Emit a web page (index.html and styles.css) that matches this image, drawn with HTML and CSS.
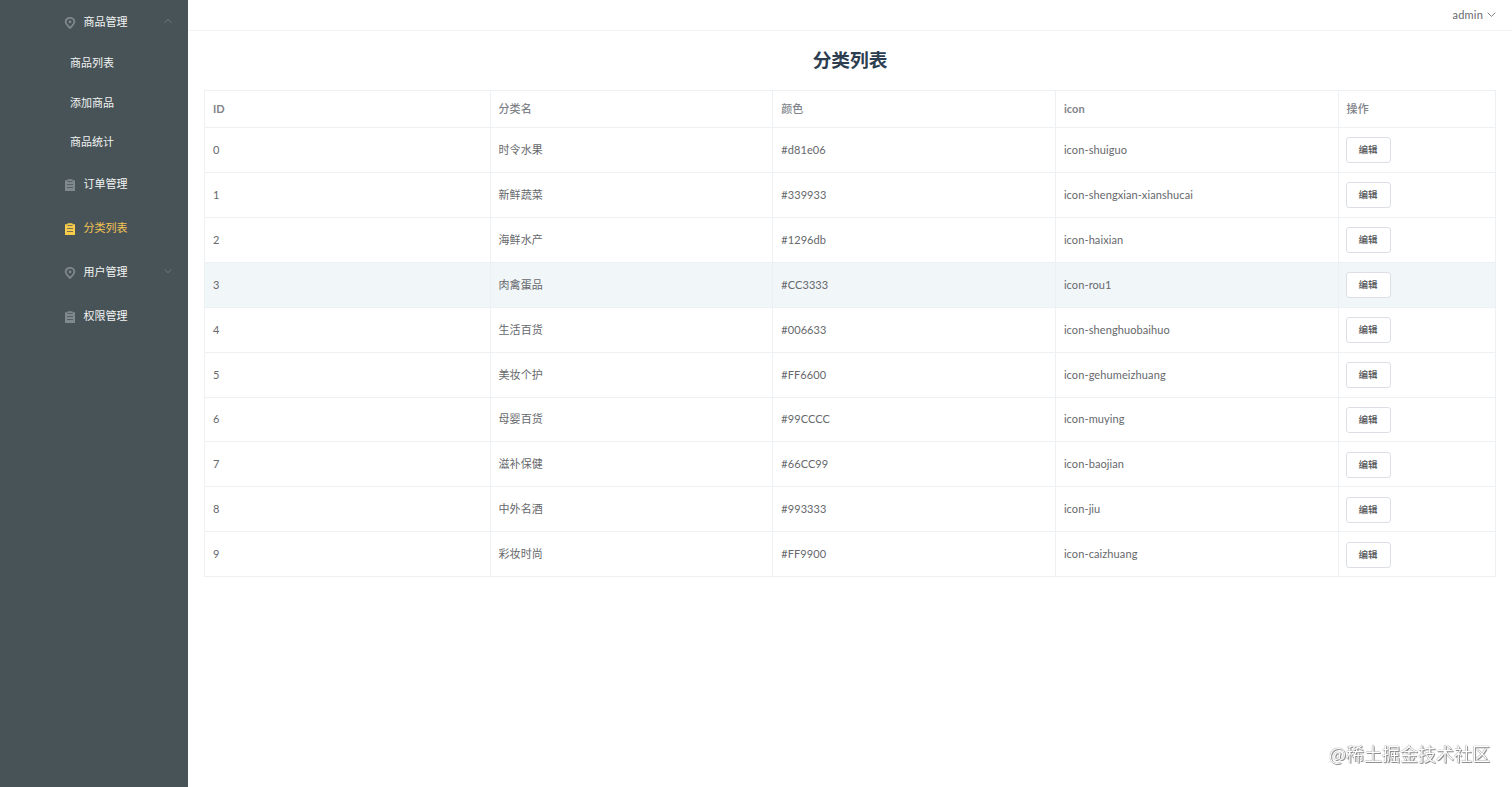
FILE: index.html
```html
<!DOCTYPE html>
<html lang="zh-CN">
<head>
    <meta charset="UTF-8">
    <meta name="viewport" content="width=device-width, initial-scale=1.0">
    <title>分类列表</title>
    <link rel="stylesheet" href="styles.css">
</head>
<body>

<!-- menu icons -->
<svg class="symbols">
    <symbol id="icon-location" viewBox="0 0 12 12">
        <path fill="none" stroke="currentColor" stroke-width="1.8" d="M6 11C4.2 8.9 1.6 7.3 1.6 4.9a4.4 4.1 0 0 1 8.8 0C10.4 7.3 7.8 8.9 6 11z"/>
        <circle fill="currentColor" cx="6" cy="4.9" r="1.4"/>
    </symbol>
    <symbol id="icon-order" viewBox="0 0 12 12">
        <path fill="currentColor" fill-rule="evenodd" d="M1 1.2h2.5V.3h5v.9H11V12H1zM3.5 2v.8h5V2zM3 4.9v.9h6v-.9zM3 8.2v.9h6v-.9z"/>
    </symbol>
    <symbol id="icon-down" viewBox="0 0 8 8">
        <path fill="none" stroke="currentColor" stroke-width=".75" d="M.6 2.4 4 5.7l3.4-3.3"/>
    </symbol>
</svg>

<div class="layout">
    <aside class="sidebar">
        <ul class="menu">
            <li>
                <div class="menu-item first">
                    <svg class="menu-icon"><use href="#icon-location"/></svg>
                    <span>商品管理</span>
                    <svg class="arrow up"><use href="#icon-down"/></svg>
                </div>
                <ul class="submenu">
                    <li>商品列表</li>
                    <li>添加商品</li>
                    <li>商品统计</li>
                </ul>
            </li>
            <li class="menu-item">
                <svg class="menu-icon"><use href="#icon-order"/></svg>
                <span>订单管理</span>
            </li>
            <li class="menu-item active">
                <svg class="menu-icon"><use href="#icon-order"/></svg>
                <span>分类列表</span>
            </li>
            <li class="menu-item">
                <svg class="menu-icon"><use href="#icon-location"/></svg>
                <span>用户管理</span>
                <svg class="arrow"><use href="#icon-down"/></svg>
            </li>
            <li class="menu-item">
                <svg class="menu-icon"><use href="#icon-order"/></svg>
                <span>权限管理</span>
            </li>
        </ul>
    </aside>

    <div class="main">
        <header class="header">
            <span>admin</span>
            <svg class="user-arrow"><use href="#icon-down"/></svg>
        </header>

        <h2 class="title">分类列表</h2>

        <table class="table">
            <colgroup>
                <col class="col-id">
                <col class="col-name">
                <col class="col-color">
                <col class="col-icon">
                <col>
            </colgroup>
            <thead>
                <tr><th class="en">ID</th><th>分类名</th><th>颜色</th><th class="en">icon</th><th>操作</th></tr>
            </thead>
            <tbody>
                <tr><td>0</td><td>时令水果</td><td>#d81e06</td><td>icon-shuiguo</td><td><button class="btn">编辑</button></td></tr>
                <tr><td>1</td><td>新鲜蔬菜</td><td>#339933</td><td>icon-shengxian-xianshucai</td><td><button class="btn">编辑</button></td></tr>
                <tr><td>2</td><td>海鲜水产</td><td>#1296db</td><td>icon-haixian</td><td><button class="btn">编辑</button></td></tr>
                <tr class="hover"><td>3</td><td>肉禽蛋品</td><td>#CC3333</td><td>icon-rou1</td><td><button class="btn">编辑</button></td></tr>
                <tr><td>4</td><td>生活百货</td><td>#006633</td><td>icon-shenghuobaihuo</td><td><button class="btn">编辑</button></td></tr>
                <tr><td>5</td><td>美妆个护</td><td>#FF6600</td><td>icon-gehumeizhuang</td><td><button class="btn">编辑</button></td></tr>
                <tr><td>6</td><td>母婴百货</td><td>#99CCCC</td><td>icon-muying</td><td><button class="btn">编辑</button></td></tr>
                <tr><td>7</td><td>滋补保健</td><td>#66CC99</td><td>icon-baojian</td><td><button class="btn">编辑</button></td></tr>
                <tr><td>8</td><td>中外名酒</td><td>#993333</td><td>icon-jiu</td><td><button class="btn">编辑</button></td></tr>
                <tr><td>9</td><td>彩妆时尚</td><td>#FF9900</td><td>icon-caizhuang</td><td><button class="btn">编辑</button></td></tr>
            </tbody>
        </table>
    </div>
</div>

<div class="watermark">@稀土掘金技术社区</div>

</body>
</html>
```
FILE: styles.css
```css
* {
    box-sizing: border-box;
}
body {
    margin: 0;
    font-family: Lato, "Noto Sans CJK SC", sans-serif;
    font-size: 11px;
    color: #66686c;
    background: #fff;
}
ul {
    list-style: none;
    margin: 0;
    padding: 0;
}
.symbols {
    display: none;
}
.layout {
    display: flex;
    height: 100vh;
    overflow: hidden;
}

/* sidebar */
.sidebar {
    width: 188px;
    flex-shrink: 0;
    background: #485357;
    color: #f2f4f4;
}
.menu-item {
    display: flex;
    align-items: center;
    height: 44px;
    padding: 0 16px 2px 64px;
}
.menu-item.first {
    height: 43px;
}
.menu-item.active {
    color: #f5c453;
}
.menu-item.active .menu-icon {
    color: #f9cb4b;
}
.menu-icon {
    width: 12px;
    height: 12px;
    margin: 4px 7.5px 0 0;
    color: #7f888d;
}
.arrow {
    width: 8px;
    height: 8px;
    margin-left: auto;
    color: #7d878c;
}
.arrow.up {
    transform: rotate(180deg);
}
.submenu li {
    height: 39.6px;
    line-height: 40px;
    padding-left: 70px;
}

/* content */
.main {
    flex: 1;
}
.header {
    display: flex;
    justify-content: flex-end;
    align-items: center;
    gap: 4px;
    height: 31px;
    padding: 0 16px 1px 0;
    border-bottom: 1px solid #f3f4f5;
    letter-spacing: 0.2px;
}
.user-arrow {
    width: 9px;
    height: 9px;
}
.title {
    margin: 0;
    height: 59px;
    line-height: 59px;
    text-align: center;
    font-size: 18.7px;
    font-weight: 700;
    color: #2c3e50;
}
.table {
    width: 1292px;
    margin-left: 16px;
    table-layout: fixed;
    border-collapse: collapse;
    line-height: 16px;
    letter-spacing: 0.1px;
}
.table th,
.table td {
    height: 44.93px;
    padding: 0 8px;
    border: 1px solid #edf1f4;
    text-align: left;
}
.table th {
    height: 37px;
    font-weight: 500;
    color: #808389;
}
.table th.en {
    font-weight: 700;
}
.table .hover td {
    background: #f1f6f9;
}
.col-id {
    width: 285.5px;
}
.col-name,
.col-color,
.col-icon {
    width: 282.7px;
}
.btn {
    display: block;
    width: 45px;
    height: 26px;
    margin: 1px 0 0 -1px;
    padding: 0 0 2px;
    font-family: inherit;
    font-size: 9.5px;
    font-weight: 500;
    color: #505256;
    background: #fff;
    border: 1px solid #dcdfe6;
    border-radius: 3px;
}

.watermark {
    position: absolute;
    right: 22px;
    bottom: 21px;
    font-family: "Noto Sans CJK SC", sans-serif;
    font-size: 18px;
    line-height: 26px;
    color: #fff;
    text-shadow: 0 0 1px #444, 1px 1px 0 #999;
    will-change: transform;
}
```
